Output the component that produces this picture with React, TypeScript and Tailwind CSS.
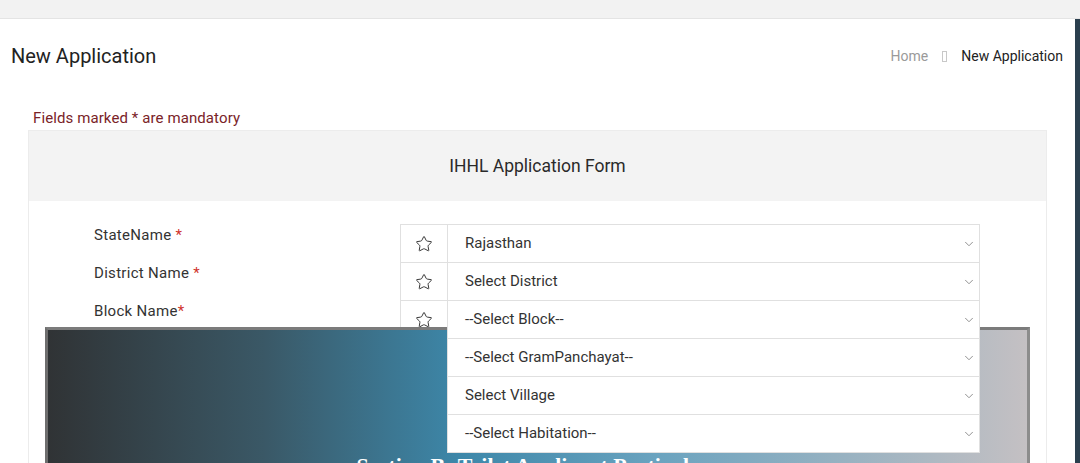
import React from 'react';
import { Star, ChevronDown } from 'lucide-react';

// IHHL — новая заявка: заголовок, хлебные крошки, карточка формы

type Row = { label: string; req: string; value: string };

const rows: Row[] = [
  { label: 'StateName', req: ' *', value: 'Rajasthan' },
  { label: 'District Name', req: ' *', value: 'Select District' },
  { label: 'Block Name', req: '*', value: '--Select Block--' },
  { label: 'Gram Panchayat Name', req: '*', value: '--Select GramPanchayat--' },
  { label: 'Village Name', req: ' *', value: 'Select Village' },
  { label: 'Habitation Name', req: '', value: '--Select Habitation--' },
];

function FormRow({ row }: { row: Row }) {
  return (
    <div className="flex items-start h-[39px] -mt-px first:mt-0">
      <div className="w-[371px] pl-[65px] pt-[1px] text-[15px] tracking-[0.3px] leading-[20px] text-[#333]">
        {row.label}
        <span className="text-[#d0342c]">{row.req}</span>
      </div>
      <div className="flex w-[580px] h-[39px]">
        <div className="w-[47px] h-full border border-r-0 border-[#e0e0e0] flex items-center justify-center text-[#333]">
          <Star size={18} strokeWidth={1.3} />
        </div>
        <div className="relative z-20 flex-1 h-full bg-white border border-[#e0e0e0] flex items-center pl-[17px] pr-[3px] text-[15px] text-[#333]">
          <span className="flex-1">{row.value}</span>
          <ChevronDown size={14} strokeWidth={1.6} className="text-[#8a8a8a]" />
        </div>
      </div>
    </div>
  );
}

export default function App() {
  return (
    <div
      className="w-[1080px] h-[463px] overflow-hidden bg-white flex flex-col"
      style={{ fontFamily: 'Roboto, "Liberation Sans", sans-serif' }}
    >
      {/* верхняя полоса */}
      <div className="h-[19px] shrink-0 bg-[#f2f2f2] border-b border-[#e4e4e4]" />

      <div className="flex flex-1 min-h-0">
        <div className="flex-1 min-w-0">
          {/* заголовок + крошки */}
          <div className="flex items-start justify-between pt-[23px] pl-[11px] pr-[12px]">
            <h1 className="text-[20px] leading-[28px] text-[#222]">New Application</h1>
            <div className="flex items-center gap-[14px] text-[14px] leading-[28px]">
              <span className="text-[#9a9a9a]">Home</span>
              <span className="w-[5px] h-[11px] border border-[#c8c8c8]" />
              <span className="text-[#222]">New Application</span>
            </div>
          </div>

          <div className="px-[28px]">
            <p className="mt-[38px] pl-[5px] text-[15px] tracking-[0.1px] leading-[20px] text-[#7a2328]">
              Fields marked * are mandatory
            </p>

            {/* карточка формы */}
            <div className="mt-[2px] border border-[#ececec]">
              <div className="h-[70px] bg-[#f3f3f3] flex items-center justify-center text-[17.5px] text-[#2a2a2a]">
                IHHL Application Form
              </div>

              <div className="relative pt-[23px] h-[400px]">
                {rows.map((r) => (
                  <FormRow key={r.label} row={r} />
                ))}

                {/* баннер раздела, перекрывает часть формы */}
                <div className="absolute z-10 left-[16px] right-[16px] top-[126px] h-[260px] border-t-[3px] border-l-[3px] border-r-[3px] border-t-[#7b7b7b] border-l-[#6e6e6e] border-r-[#8c8c8c] bg-[linear-gradient(to_right,#303335_0%,#3a5866_22%,#3d87a9_42%,#6aa3bf_62%,#c4c0c3_100%)]">
                  <div
                    className="pt-[122px] text-center text-white font-bold text-[22px] leading-[28px]"
                    style={{ fontFamily: '"Liberation Serif", serif' }}
                  >
                    Section B: Toilet Applicant Particulars
                  </div>
                </div>
              </div>
            </div>
          </div>
        </div>

        {/* правая тёмная кромка */}
        <div className="w-[5px] shrink-0 bg-[#2b3f4e]" />
      </div>
    </div>
  );
}
